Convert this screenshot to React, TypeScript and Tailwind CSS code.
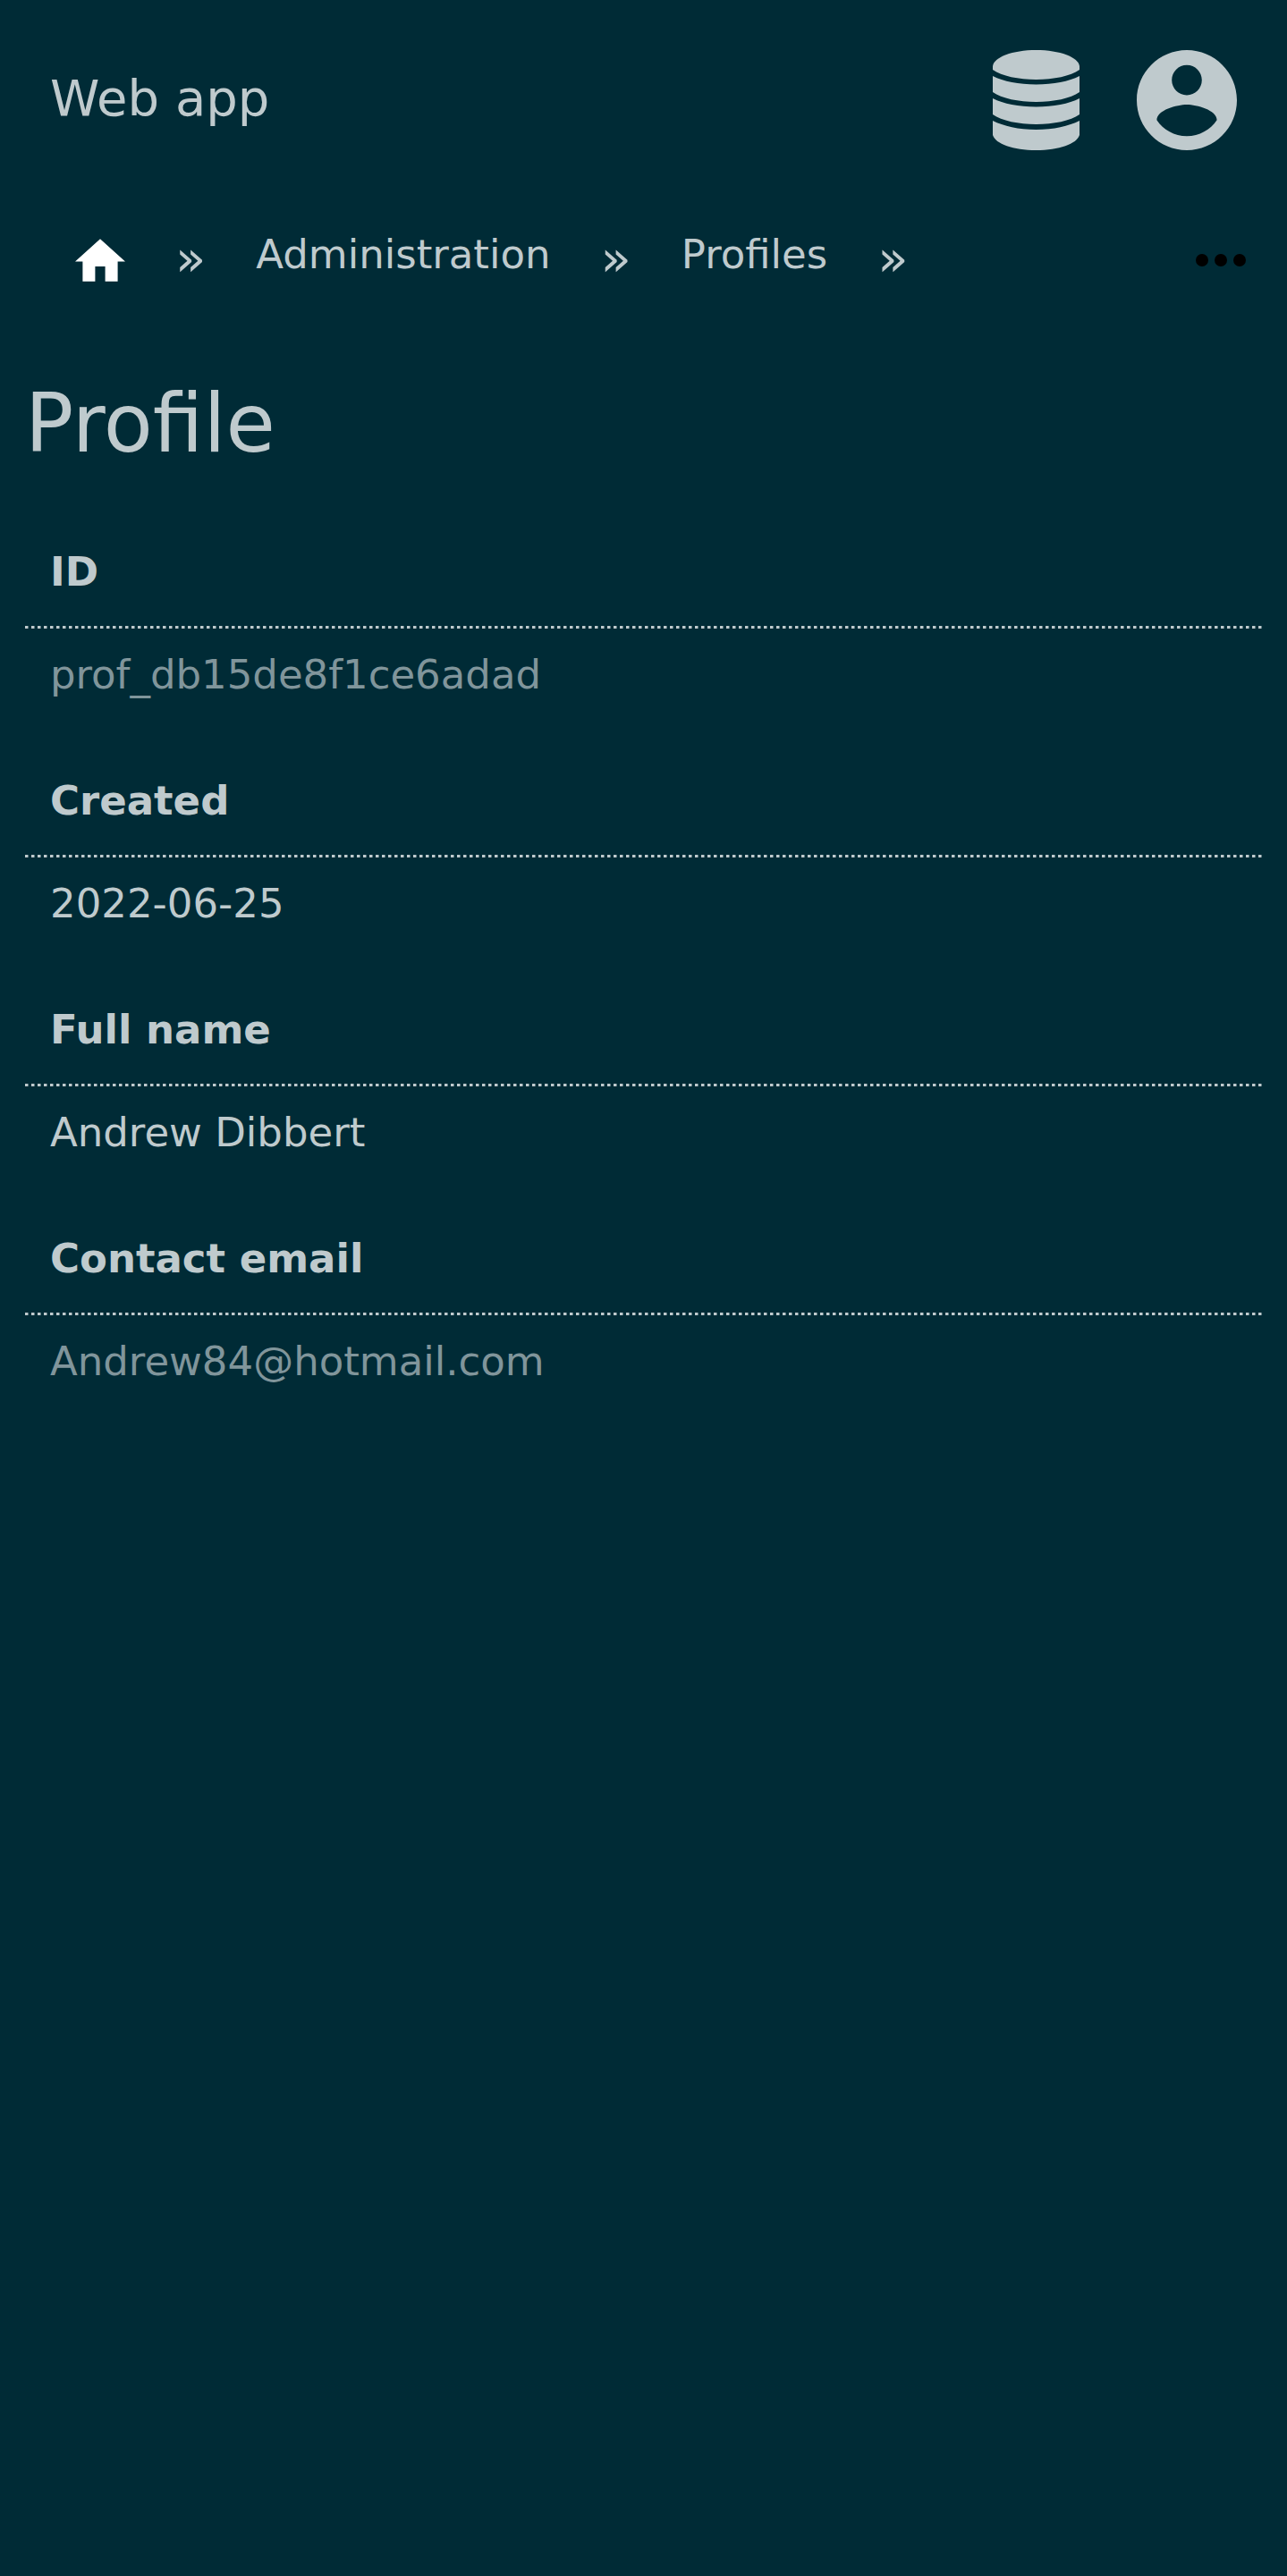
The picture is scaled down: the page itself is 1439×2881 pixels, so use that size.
type Field = { label: string; value: string; muted?: boolean };

const fields: Field[] = [
  { label: "ID", value: "prof_db15de8f1ce6adad", muted: true },
  { label: "Created", value: "2022-06-25" },
  { label: "Full name", value: "Andrew Dibbert" },
  { label: "Contact email", value: "Andrew84@hotmail.com", muted: true },
];

function DatabaseIcon() {
  return (
    <svg viewBox="0 0 97 112" className="h-[112px] w-[97px]" fill="currentColor" aria-hidden="true">
      <path d="M0 18C1 8 22 0 48.500 0S96 8 97 18V22C87 29 68 33 48.500 33S10 29 0 22Z" />
      <path d="M0 29C12 35 29 38.500 48.500 38.500S85 35 97 29V47C87 54 68 58 48.500 58S10 54 0 47Z" />
      <path d="M0 54C12 60 29 63.500 48.500 63.500S85 60 97 54V72C87 79 68 83 48.500 83S10 79 0 72Z" />
      <path d="M0 79C12 85 29 89 48.500 89S85 85 97 79V95C94 105 74 112 48.500 112S3 105 0 95Z" />
    </svg>
  );
}

function AccountIcon() {
  return (
    <svg viewBox="2 2 20 20" className="size-28" fill="currentColor" aria-hidden="true">
      <path d="M12 2C6.480 2 2 6.480 2 12s4.480 10 10 10 10-4.480 10-10S17.520 2 12 2zm0 3c1.660 0 3 1.340 3 3s-1.340 3-3 3-3-1.340-3-3 1.340-3 3-3zm0 14.200c-2.500 0-4.710-1.280-6-3.220.030-1.990 4-3.080 6-3.080 1.990 0 5.970 1.090 6 3.080-1.290 1.940-3.500 3.220-6 3.220z" />
    </svg>
  );
}

function HomeIcon() {
  return (
    <svg viewBox="2 3 20 17" className="h-12 w-14" fill="currentColor" aria-hidden="true">
      <path d="M10 20v-6h4v6h5v-8h3L12 3 2 12h3v8z" />
    </svg>
  );
}

function MoreIcon() {
  return (
    <svg viewBox="4 10 16 4" className="h-[14px] w-14" fill="currentColor" aria-hidden="true">
      <circle cx="6" cy="12" r="2" />
      <circle cx="12" cy="12" r="2" />
      <circle cx="18" cy="12" r="2" />
    </svg>
  );
}

function Separator() {
  return (
    <span className="pb-1 text-[56px] leading-[64px]" aria-hidden="true">
      »
    </span>
  );
}

export default function App() {
  return (
    <div className="min-h-screen bg-[#002b36] font-['DejaVu_Sans',sans-serif] text-[45px] leading-[52px] text-[#bfcacd]">
      <header className="flex items-center justify-between p-14">
        <a href="#" className="pb-1 text-[56px] leading-[64px]">
          Web app
        </a>
        <div className="flex items-center gap-16">
          <button type="button" aria-label="Data">
            <DatabaseIcon />
          </button>
          <button type="button" aria-label="Account">
            <AccountIcon />
          </button>
        </div>
      </header>

      <nav aria-label="Breadcrumb" className="flex h-[134px] items-center justify-between pr-[46px] pl-[84px]">
        <div className="flex items-center gap-14">
          <a href="#" aria-label="Home" className="text-white">
            <HomeIcon />
          </a>
          <Separator />
          <a href="#" className="pb-3">Administration</a>
          <Separator />
          <a href="#" className="pb-3">Profiles</a>
          <Separator />
        </div>
        <button type="button" aria-label="More" className="text-black">
          <MoreIcon />
        </button>
      </nav>

      <main className="px-7 pt-16">
        <h1 className="text-[90px] leading-[104px]">Profile</h1>
        <dl className="mt-[60px] flex flex-col gap-[33px]">
          {fields.map((field) => (
            <div key={field.label}>
              <dt className="px-7 pt-7 pb-[34px] font-bold">{field.label}</dt>
              <dd>
                <div className="h-[3px] bg-[repeating-linear-gradient(90deg,#bfcacd_0px,#bfcacd_3px,#607b82_3px,#607b82_4px,transparent_4px,transparent_7px)]" />
                <div className="px-7 pt-[26px] pb-7">
                  {field.muted ? (
                    <span className="text-[#80959b]">{field.value}</span>
                  ) : (
                    field.value
                  )}
                </div>
              </dd>
            </div>
          ))}
        </dl>
      </main>
    </div>
  );
}
